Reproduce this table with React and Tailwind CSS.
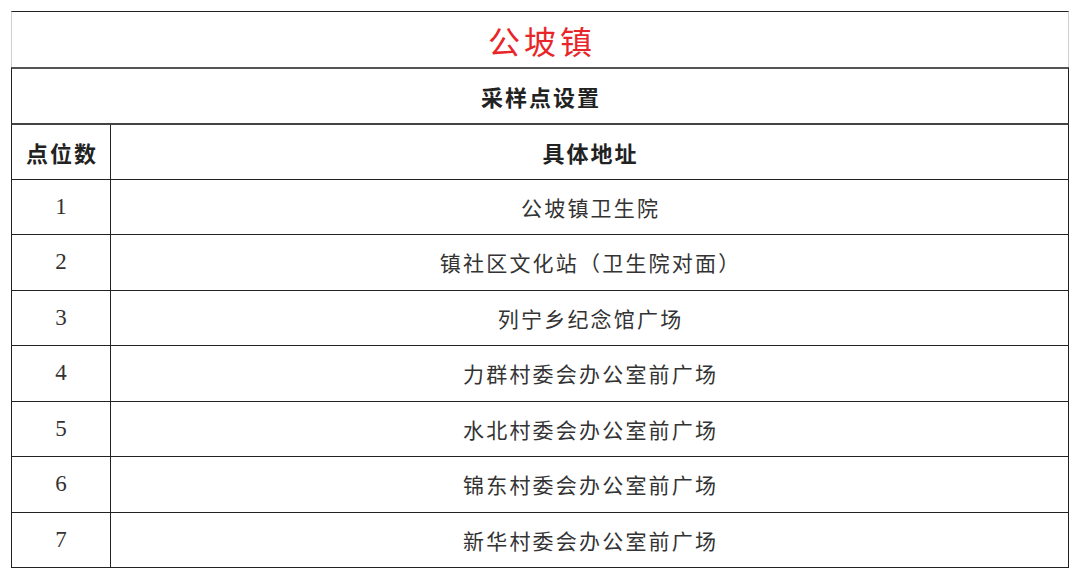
export default function App() {
  const rows = [
    ["1", "公坡镇卫生院", "h-[55px]"],
    ["2", "镇社区文化站（卫生院对面）", "h-[56px]"],
    ["3", "列宁乡纪念馆广场", "h-[55px]"],
    ["4", "力群村委会办公室前广场", "h-[56px]"],
    ["5", "水北村委会办公室前广场", "h-[55px]"],
    ["6", "锦东村委会办公室前广场", "h-[56px]"],
    ["7", "新华村委会办公室前广场", "h-[56px]"],
  ];
  const cjk = "font-['Noto_Sans_CJK_SC','Noto_Sans',sans-serif]";
  return (
    <div className="w-[1080px] h-[579px] bg-white pt-[11px] pl-[11px]">
      <div className="w-[1058px] flex flex-col">
        <div className={`h-[56px] border-t-[1.5px] border-t-[#222] border-x border-x-[#cfcfcf] flex items-center justify-center text-[32px] leading-none text-[#e8262a] tracking-[4px] ${cjk}`}>
          <span className="pl-[4px]">公坡镇</span>
        </div>
        <div className={`h-[56px] border-t-2 border-t-[#555] border-x-[1.5px] border-x-[#222] flex items-center justify-center text-[22px] leading-none font-bold text-[#222] tracking-[2px] ${cjk}`}>
          <span className="pl-[2px]">采样点设置</span>
        </div>
        <div className={`h-[56px] border-t-2 border-t-[#444] border-x-[1.5px] border-x-[#222] flex text-[22px] leading-none font-bold text-[#222] tracking-[2px] ${cjk}`}>
          <div className="w-[99px] border-r-[1.5px] border-r-[#222] flex items-center justify-center">
            <span className="pl-[2px]">点位数</span>
          </div>
          <div className="flex-1 flex items-center justify-center">
            <span className="pl-[2px]">具体地址</span>
          </div>
        </div>
        {rows.map(([n, addr, h], i) => (
          <div
            key={n}
            className={`${h} border-t-[1.5px] border-t-[#222] border-x-[1.5px] border-x-[#222] flex ${i === rows.length - 1 ? "border-b-[1.5px] border-b-[#222]" : ""}`}
          >
            <div className="w-[99px] border-r-[1.5px] border-r-[#222] flex items-center justify-center font-['Liberation_Serif',serif] text-[23px] text-[#333]">
              {n}
            </div>
            <div className={`flex-1 flex items-center justify-center text-[21px] leading-none text-[#333] tracking-[2.2px] ${cjk}`}>
              <span className="pl-[2.2px]">{addr}</span>
            </div>
          </div>
        ))}
      </div>
    </div>
  );
}
